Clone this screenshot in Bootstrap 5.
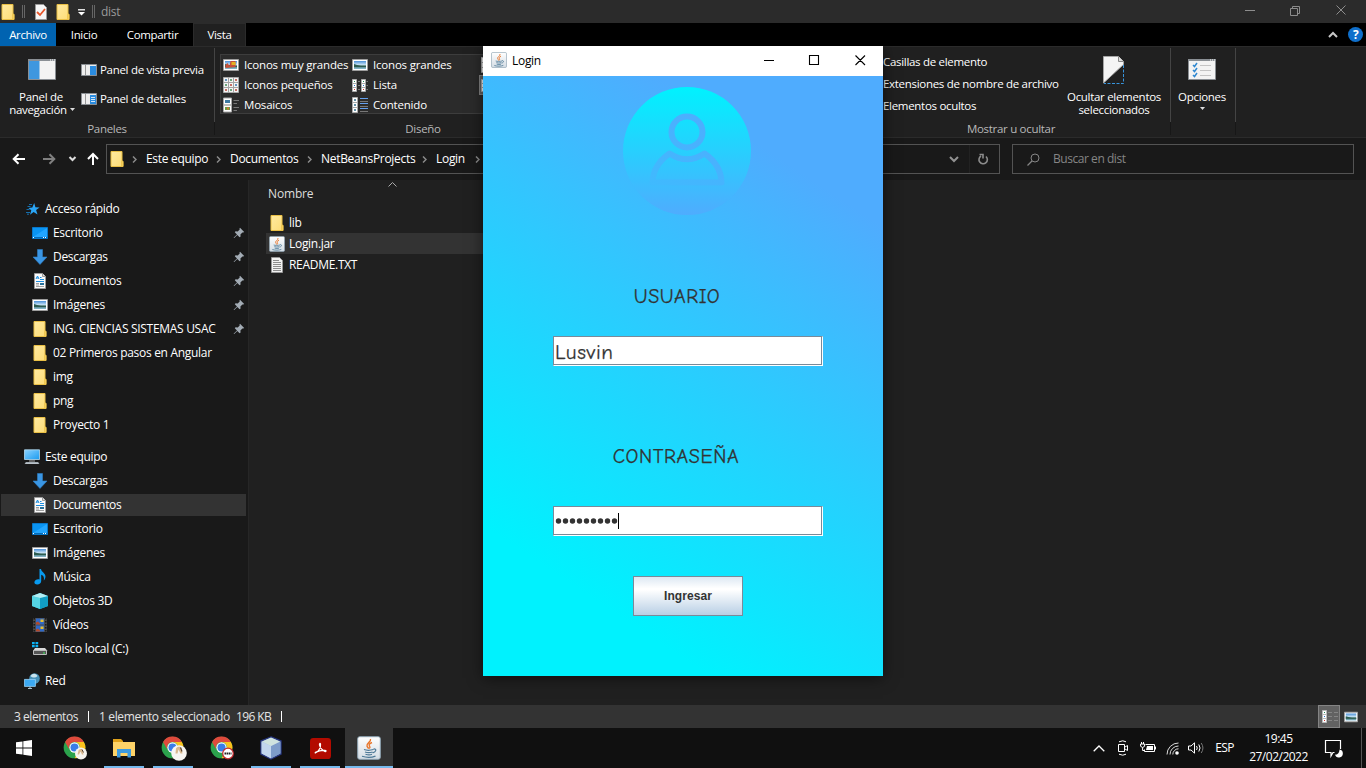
<!DOCTYPE html>
<html lang="es">
<head>
<meta charset="utf-8">
<meta name="viewport" content="width=device-width, initial-scale=1">
<title>dist</title>
<link href="https://cdn.jsdelivr.net/npm/bootstrap@5.3.0/dist/css/bootstrap.min.css" rel="stylesheet">
<style>
  body { width: 1366px; height: 768px; overflow: hidden; background: #191919; color: #fff; font: 12px/16px "Open Sans", "Noto Sans", sans-serif; letter-spacing: -.3px; white-space: nowrap; }
  svg { display: block; flex: none; overflow: visible; }
  .titlebar { height: 23px; background: #2b2b2b; color: #9a9a9a; }
  .tick { width: 3px; height: 13px; border: 1px solid #666; border-width: 0 1px; }
  .tabs { height: 23px; background: #000; font-size: 11.5px; letter-spacing: -.35px; }
  .tabs > .tab { height: 23px; line-height: 24px; text-align: center; }
  .tab-file { width: 56px; background: #0063b1; }
  .tab-on { width: 53px; background: #202020; border: 1px solid #2b2b2b; border-bottom: 0; line-height: 22px !important; }
  .ribbon { height: 92px; background: #202020; border-top: 1px solid #2b2b2b; border-bottom: 1px solid #2b2b2b; font-size: 11.5px; letter-spacing: -.3px; }
  .group { height: 90px; border-right: 1px solid #3c3c3c; border-image: linear-gradient(#202020 2px, #444 2px 74px, #171717 74px 87px, #202020 87px) 1; border-width: 0 1px 0 0; border-style: solid; }
  .caption { height: 16px; color: #b8b8b8; text-align: center; }
  .gallery { width: 650px; height: 60px; border: 1px solid #3d3d3d; background: #2b2b2b; letter-spacing: -.2px; }
  .gallery .cell { height: 20px; }
  .gallery .cell span { margin-top: -1px; }
  .center-lines { text-align: center; line-height: 13px; }
  .address { height: 42px; background: #191919; }
  .box { height: 30px; border: 1px solid #535353; }
  .side { width: 249px; background: #191919; border-right: 1px solid #262626; padding-top: 17px; }
  .row24 { height: 24px; }
  .side .child { padding-left: 32px; }
  .side .root { padding-left: 24px; }
  .picked { background: #333; box-shadow: inset 0 1px #191919, inset 0 -1px #191919, inset 1px 0 #191919; margin-right: 2px; }
  .files { background: #202020; }
  .file { height: 21px; margin-left: 17px; padding-left: 3px; }
  .status { height: 23px; background: #333; color: #e4e4e4; }
  .viewbtn { width: 22px; height: 23px; background: #626262; border: 1px solid #848484; }
  .taskbar { height: 40px; background: #101010; }
  .app { width: 48px; height: 40px; }
  .open::after { content: ""; position: absolute; left: 4px; right: 4px; bottom: 0; height: 2px; background: #76b9ed; }
  .active { background: #333; }
  .active::after { left: 0; right: 0; }
  .tray > .slot { width: 24px; }
  .login { left: 483px; top: 46px; width: 400px; height: 630px; box-shadow: 0 2px 14px rgba(0,0,0,.55); }
  .login-title { height: 30px; background: #fff; color: #000; }
  .login-body { height: 600px; background: linear-gradient(213.69deg, #4facfe 17.4%, #00f2fe 82.6%); color: #333; }
  .comic { font-family: "Comic Sans MS", "Comic Neue", "Open Sans", sans-serif; font-size: 20px; line-height: 26px; letter-spacing: .65px; -webkit-text-stroke: .25px #333; }
  .entry { width: 270px; height: 30px; background: #fff; border: 1px solid #7a8a99; border-right-color: #fff; border-bottom-color: #fff; box-shadow: inset -1px -1px #7a8a99; padding-left: 1px; }
  .caret { width: 1px; height: 16px; background: #000; }
  .go { width: 110px; height: 40px; border: 1px solid #7a8a99; background: linear-gradient(#dde8f3, #fff 30%, #fff 34%, #b8cfe5); font: bold 12px "Liberation Sans", sans-serif; color: #333; letter-spacing: .05px; border-radius: 0; padding: 0; }
</style>
</head>
<body>
<svg width="0" height="0" class="position-absolute">
  <defs>
    <linearGradient id="gy" x1="0" y1="0" x2="1" y2="1"><stop offset="0" stop-color="#ffeaa0"/><stop offset="1" stop-color="#fddc76"/></linearGradient>
    <linearGradient id="gb" x1="0" y1="0" x2="1" y2="1"><stop offset="0" stop-color="#8ad2ff"/><stop offset="1" stop-color="#1a9bf0"/></linearGradient>
    <linearGradient id="av" x1="0" y1="0" x2="0" y2="1"><stop offset="0" stop-color="#00f2fe"/><stop offset="1" stop-color="#4facfe"/></linearGradient>
    <linearGradient id="sky" x1="0" y1="0" x2="0" y2="1"><stop offset="0" stop-color="#4a8fd8"/><stop offset=".5" stop-color="#cfe8f7"/><stop offset=".6" stop-color="#3b6a60"/><stop offset="1" stop-color="#8fc0d8"/></linearGradient>
    <linearGradient id="jv" x1="0" y1="0" x2="0" y2="1"><stop offset="0" stop-color="#fff"/><stop offset="1" stop-color="#d3dce4"/></linearGradient>
    <symbol id="folder" viewBox="0 0 16 16"><path d="M2 .5h11v10h1v5H2z" fill="url(#gy)" stroke="#e9bf45"/><path d="M12.500 15.500v-4.500l.5-1h1v5.500z" fill="#fbd766" stroke="#e9bf45" stroke-width=".7"/></symbol>
    <symbol id="desk" viewBox="0 0 16 16"><path d="M.5 2.500h15v11h-15z" fill="#0a94f2" stroke="#0877c9"/><path d="M1 12L15 3v9z" fill="#22a5ff"/><path d="M1 12.500h14" stroke="#046bb8"/><path d="M1 12.500h1M11 12.500h1M13 12.500h1" stroke="#fff"/></symbol>
    <symbol id="down" viewBox="0 0 16 16"><path d="M5.500 .5h5v7.500H15L8 15.500 1 8h4.500z" fill="#3a96e4" stroke="#2f7fc6" stroke-width=".6"/></symbol>
    <symbol id="doc" viewBox="0 0 16 16"><path d="M2.500 .5h8l3 3v12h-11z" fill="#fafafa" stroke="#9b9b9b"/><path d="M10.500 .5v3h3" fill="#ddd" stroke="#888" stroke-width=".8"/><path d="M4 6l1.500-3L7 6M4.500 5h2M8 4.500h1.500M8 6.500h4M4 8.500h8" stroke="#1c8ee0" fill="none"/><path d="M4 10.500h3M4 13.500h8M4 12h3" stroke="#888" stroke-width=".8"/><path d="M8 10h4v2H8z" fill="#27709b"/></symbol>
    <symbol id="pic" viewBox="0 0 16 16"><path d="M.5 2.500h15v11h-15z" fill="#fff" stroke="#9d9d9d"/><path d="M2 4h12v8H2z" fill="url(#sky)"/><path d="M2 7l3 1 4 1h5v1H2z" fill="#2c5c50"/></symbol>
    <symbol id="pin" viewBox="0 0 12 12"><path d="M7 .8l4.200 4.200-1 .6-.8-.2-2 2 .2 2.100-1 .8L4.300 8 1.200 11H.8v-.5L4 7.500 1.800 5.300l.8-1 2.100.2 2-2L6.500 1.500z" fill="#a3acb5"/></symbol>
    <symbol id="star" viewBox="0 0 16 16"><path d="M10.200 2l1.200 4.200 4.200.2-3.500 2.600 1.400 4.500-3.900-2.500L6 13.800l1.300-4.500L4.400 7l3.900-.5z" fill="#2aa5f5"/><path d="M5 3.500h3M3.500 5.500h3M2.500 8.500h3M2 11.500h4M3 13.200h2" stroke="#1583cf" stroke-width=".8"/></symbol>
    <symbol id="pc" viewBox="0 0 16 16"><path d="M.5 .8h15v9.700H.5z" fill="url(#gb)" stroke="#b5dcf2" stroke-width=".8"/><path d="M5 12h6" stroke="#aaa"/><path d="M2 13h12l1.500 2H.5z" fill="#8f9ba4"/><path d="M1.500 14.200h13" stroke="#e8edf0" stroke-width=".7"/></symbol>
    <symbol id="note" viewBox="0 0 16 16"><path d="M7.500 0h1.500c.3 3 4.500 4 4.500 7.500 0 1.500-.8 3-1.700 4 .7-3-.3-5-2.600-5.700V12c0 2-1.800 3.500-3.900 3.500S2.200 14.200 2.400 13c.3-2 2.800-3.300 5.100-2.600z" fill="#089aef"/></symbol>
    <symbol id="cube" viewBox="0 0 16 16"><path d="M0 3L8 0l8 3v10l-8 3-8-3z" fill="#28b8d2"/><path d="M0 3l8 2v11l-8-3z" fill="#55d5e4"/><path d="M8 5l8-2v10l-8 3z" fill="#119dc3"/><path d="M0 3l8-3 8 3-8 2z" fill="#b2eef4"/></symbol>
    <symbol id="film" viewBox="0 0 16 16"><path d="M1 1h14v14H1z" fill="#4a4a4a"/><path d="M2.200 1v14M13.800 1v14" stroke="#151515" stroke-dasharray="1.500 1.500" stroke-width="1.400"/><path d="M4 1.500h8v6H4zM4 8.500h8v6H4z" fill="#2f68c6"/><path d="M4 5.500l2-1 2 2v1H4zM4 12.500l2-1 2 2v1H4z" fill="#b34a2b"/><path d="M8.500 2.500h3v2.500h-3zM8.500 9.500h3V12h-3z" fill="#e9bf2d"/></symbol>
    <symbol id="disk" viewBox="0 0 16 16"><path d="M0 1h2.700v2.300H0zM3.500 1h2.700v2.300H3.500zM0 4h2.700v2.300H0zM3.500 4h2.700v2.300H3.500z" fill="#0db3f5"/><path d="M3 7h10l2.500 3H1z" fill="#d8d8d8"/><path d="M1.500 9.500h13v4h-13z" fill="#555" stroke="#bbb"/><path d="M11 12h2" stroke="#3df05a"/></symbol>
    <symbol id="net" viewBox="0 0 16 16"><circle cx="10.500" cy="5.500" r="5.300" fill="#4591b8"/><path d="M6.500 3c2-3 5-3 7 0-2 2-5 2-7 0" fill="#c9e4ee"/><path d="M.4 6.400h11v7H.4z" fill="#3ca9f2" stroke="#99d3f7" stroke-width=".8"/><path d="M4 15.500h4M6 13.500v2" stroke="#a9c4d3"/></symbol>
    <symbol id="cup" viewBox="0 0 24 24"><rect x=".7" y=".7" width="22.600" height="22.600" rx="2" fill="url(#jv)" stroke="#8fa5b4" stroke-width="1"/><path d="M13.500 3c1 3-4.500 4.200-3.500 7 .3 1 1.500 1.700 1.500 2.700M15 6.500c-3 1.200-3.400 2.300-2.300 3.800.5.800.2 1.600-.4 2.200" fill="none" stroke="#e8762c" stroke-width="1.400"/><path d="M7 13.500c2 .8 7 .7 9.500 0M8 16c2 .7 5.500.7 7.500 0M8.500 18.300c2 .6 5 .6 6.500 0M5 20.300c4 1.300 10 1.200 13.500-.2M16.500 13c3.500-.5 2.800 3-.8 3.800" fill="none" stroke="#4d7896" stroke-width="1.200"/></symbol>
    <symbol id="txt" viewBox="0 0 16 16"><path d="M2.500 .5h8l3 3v12h-11z" fill="#f2f2f2" stroke="#999"/><path d="M4 3.500h6M4 5.500h8M4 7.500h8M4 9.500h8M4 11.500h8M4 13.500h8" stroke="#8c8c8c"/></symbol>
    <symbol id="chrome" viewBox="0 0 24 24"><circle cx="12" cy="12" r="11.300" fill="#2ba24c"/><path d="M2.200 6.300A11.300 11.300 0 0 1 21.800 6.300H12a5.700 5.700 0 0 0-5 8.500z" fill="#df4a3c"/><path d="M21.800 6.300A11.300 11.300 0 0 1 12 23.300l5-8.500a5.700 5.700 0 0 0-5-8.500z" fill="#fbc21c"/><circle cx="12" cy="12" r="5.400" fill="#fff"/><circle cx="12" cy="12" r="4.200" fill="#3a7de8"/></symbol>
    <symbol id="small" viewBox="0 0 16 16"><path d="M.5 .5h15v15H.5z" fill="#f4f4f4" stroke="#aaa"/><path d="M5.500 0v16M10.500 0v16M0 5.500h16M0 10.500h16" stroke="#a4a4a4"/><path d="M2 3h2M12 8h2" stroke="#3675ae" stroke-width="1.600"/><path d="M7 3h2M2 8h2M7 13h2" stroke="#3f8b55" stroke-width="1.600"/><path d="M12 3h2M7 8h2M12 13h2M2 13h2" stroke="#b64336" stroke-width="1.600"/></symbol>
    <symbol id="list" viewBox="0 0 16 16"><path d="M.5 2.500h4v12h-4zM9.500 2.500h4v12h-4z" fill="#fff" stroke="#aaa"/><path d="M0 6.500h5M0 10.500h5M9 6.500h5M9 10.500h5" stroke="#aaa"/><path d="M2 4.500h1M11 4.500h1" stroke="#278a57"/><path d="M2 8.500h1M11 8.500h1" stroke="#2573d0"/><path d="M2 12.500h1M11 12.500h1" stroke="#d03030"/><path d="M6 4.500h2M6 8.500h2M6 12.500h2M14.500 4.500H16M14.500 8.500H16M14.500 12.500H16" stroke="#777"/></symbol>
    <symbol id="tiles" viewBox="0 0 16 16"><path d="M.5 1h8v7h-8zM.5 8h8v7h-8z" fill="#fff" stroke="#aaa"/><path d="M2 3h5v3H2z" fill="#3d7aa2"/><path d="M2 10h5v3H2z" fill="#6a9d47"/><path d="M4 10.500h2v2H4z" fill="#d87534"/><path d="M10.500 3.500H16M10.500 6.500H14M10.500 10.500H16M10.500 13.500H14" stroke="#777"/></symbol>
    <symbol id="cont" viewBox="0 0 16 16"><path d="M.5 .5h5v5h-5zM.5 5.500h5v5h-5zM.5 10.500h5v5h-5z" fill="#fff" stroke="#aaa"/><path d="M2 3h2M2 8h2M2 13h2" stroke="#316d8b" stroke-width="1.500"/><path d="M8 1.500h8M8 6.500h8M8 11.500h8" stroke="#64a0ee"/><path d="M8 4.500h8M8 9.500h8M8 14.500h8" stroke="#777"/></symbol>
    <symbol id="sep" viewBox="0 0 5 7"><path d="M1 .5l3 3-3 3" fill="none" stroke="#8a8a8a" stroke-width="1.500"/></symbol>
  </defs>
</svg>

<div class="d-flex flex-column vh-100">
  <header class="titlebar d-flex align-items-center">
    <svg width="16" height="16"><use href="#folder"/></svg>
    <span class="tick" style="margin-left:6px"></span>
    <svg width="14" height="16" viewBox="0 0 14 16" style="margin-left:9px"><path d="M1.500 .5h8l3 3v12h-11z" fill="#f6f6f6" stroke="#999"/><path d="M3 8l3 3 5-6" fill="none" stroke="#e8562b" stroke-width="1.800"/></svg>
    <svg width="16" height="16" style="margin-left:7px"><use href="#folder"/></svg>
    <svg width="8" height="8" viewBox="0 0 8 8" style="margin:3px 0 0 7px"><path d="M0 .8h7" stroke="#fff" stroke-width="1.300"/><path d="M0 3h7L3.500 6.500z" fill="#fff"/></svg>
    <span class="tick" style="margin-left:6px"></span>
    <span style="margin-left:6px">dist</span>
    <div class="d-flex ms-auto align-items-center" style="margin-right:19px">
      <svg width="102" height="12" viewBox="0 0 102 12" style="margin-bottom:3px"><path d="M0 6.500h10M45.500 4.500h7v7h-7zM47.500 4v-1.500h7v7H53M91.500 1.500l9 9M100.500 1.500l-9 9" fill="none" stroke="#8d8d8d"/></svg>
    </div>
  </header>

  <nav class="tabs d-flex">
    <span class="tab tab-file">Archivo</span>
    <span class="tab" style="width:56px">Inicio</span>
    <span class="tab" style="width:81px">Compartir</span>
    <span class="tab tab-on">Vista</span>
    <div class="ms-auto d-flex align-items-center">
      <svg width="10" height="7" viewBox="0 0 10 7"><path d="M1 6l4-4 4 4" fill="none" stroke="#c8c8c8" stroke-width="2"/></svg>
      <svg width="15" height="15" viewBox="0 0 15 15" style="margin:0 3px 0 10px"><circle cx="7.500" cy="7.500" r="7.500" fill="#0f6fcb"/><text x="7.600" y="12" font-size="12" font-weight="700" fill="#fff" text-anchor="middle">?</text></svg>
    </div>
  </nav>

  <section class="ribbon d-flex">
    <div class="group d-flex flex-column" style="width:215px">
      <div class="d-flex" style="height:74px">
        <div class="center-lines d-flex flex-column align-items-center" style="width:84px;padding-top:12px">
          <svg width="28" height="21" viewBox="0 0 28 21"><path d="M.5 .5h27v20H.5z" fill="#f3f3f3" stroke="#8a8f94"/><path d="M1 2h10.500v18H1z" fill="#3e97df"/><path d="M0 1h28" stroke="#8a8f94" stroke-width="2"/><path d="M22 1h5" stroke="#fff" stroke-dasharray="1 1"/></svg>
          <div style="margin:10px 2px 0 0">Panel de</div>
          <div class="d-flex align-items-center">navegación<svg width="5" height="4" viewBox="0 0 5 4" style="margin-left:3px"><path d="M0 0h5L2.500 3z" fill="#ddd"/></svg></div>
        </div>
        <div class="d-flex flex-column" style="padding-top:15px;gap:13px;margin-left:-3px">
          <div class="d-flex align-items-center"><svg width="16" height="12" viewBox="0 0 16 12" style="margin-right:3px"><path d="M.5 .5h15v11H.5z" fill="#eee" stroke="#8a8f94"/><path d="M4.500 1v10" stroke="#999"/><path d="M9 2h6v9H9z" fill="#2a8ce0"/></svg>Panel de vista previa</div>
          <div class="d-flex align-items-center"><svg width="16" height="12" viewBox="0 0 16 12" style="margin-right:3px"><path d="M.5 .5h15v11H.5z" fill="#eee" stroke="#8a8f94"/><path d="M4.500 1v10" stroke="#999"/><path d="M9 2h6v9H9z" fill="#2a8ce0"/><path d="M10 4.500h4M10 6.500h4M10 8.500h4" stroke="#fff" stroke-width=".8"/></svg>Panel de detalles</div>
        </div>
      </div>
      <div class="caption">Paneles</div>
    </div>
    <div class="d-flex flex-column" style="width:668px;padding:7px 0 0 5px">
      <div class="gallery d-flex">
        <div style="width:129px;padding-left:2px">
          <div class="cell d-flex align-items-center"><svg width="16" height="16" viewBox="0 0 16 16"><use href="#pic" width="16" height="16"/><path d="M2.500 11V8l2-2 2 3 1-5h5v6z" fill="#c8503a"/><path d="M8.500 5h4v3h-4z" fill="#e3b221"/></svg><span style="margin-left:5px">Iconos muy grandes</span></div>
          <div class="cell d-flex align-items-center"><svg width="16" height="16"><use href="#small"/></svg><span style="margin-left:5px">Iconos pequeños</span></div>
          <div class="cell d-flex align-items-center"><svg width="16" height="16"><use href="#tiles"/></svg><span style="margin-left:5px">Mosaicos</span></div>
        </div>
        <div style="width:129px;padding-left:2px">
          <div class="cell d-flex align-items-center"><svg width="16" height="16"><use href="#pic"/></svg><span style="margin-left:5px">Iconos grandes</span></div>
          <div class="cell d-flex align-items-center"><svg width="16" height="16"><use href="#list"/></svg><span style="margin-left:5px">Lista</span></div>
          <div class="cell d-flex align-items-center"><svg width="16" height="16"><use href="#cont"/></svg><span style="margin-left:5px">Contenido</span></div>
        </div>
        <div style="width:129px">
          <div class="cell d-flex align-items-center" style="padding-left:2px"><svg width="16" height="16"><use href="#small"/></svg></div>
          <div class="cell d-flex align-items-center" style="background:#626262;border:1px solid #848484;padding-left:1px"><svg width="16" height="16"><use href="#list"/></svg></div>
        </div>
      </div>
      <div class="caption" style="width:406px;margin-top:7px">Diseño</div>
    </div>
    <div class="group d-flex flex-column" style="width:288px">
      <div class="d-flex" style="height:74px">
        <div class="d-flex flex-column" style="width:177px;padding-top:7px;gap:6px"><span>Casillas de elemento</span><span>Extensiones de nombre de archivo</span><span>Elementos ocultos</span></div>
        <div class="center-lines d-flex flex-column align-items-center" style="width:108px;padding-top:9px">
          <svg width="22" height="28" viewBox="0 0 22 28"><path d="M.5 27V.5h15l5 5v3z" fill="#f4f4f4" stroke="#a5a5a5"/><path d="M15.500 .5v5h5" fill="#ddd" stroke="#888"/><path d="M20.500 9v18.500H1" fill="none" stroke="#3795de" stroke-dasharray="3 1.500"/></svg>
          <div style="margin-top:6px">Ocultar elementos</div>
          <div>seleccionados</div>
        </div>
      </div>
      <div class="caption" style="margin-right:31px">Mostrar u ocultar</div>
    </div>
    <div class="group center-lines d-flex flex-column align-items-center" style="width:65px;padding:12px 2px 0 0">
      <svg width="28" height="21" viewBox="0 0 28 21"><path d="M.5 .5h27v20H.5z" fill="#f3f3f3" stroke="#8a8f94"/><path d="M0 1h28" stroke="#8a8f94" stroke-width="2"/><path d="M22 1h5" stroke="#fff" stroke-dasharray="1 1"/><path d="M12 6.500h11M12 11.500h11M12 16.500h11" stroke="#c4c4c4"/><path d="M5 6l1.500 1.500L9 4M5 11l1.500 1.500L9 9M5 16l1.500 1.500L9 14" fill="none" stroke="#3088d0" stroke-width="1.500"/></svg>
      <div style="margin-top:10px">Opciones</div>
      <svg width="5" height="4" viewBox="0 0 5 4" style="margin-top:4px"><path d="M0 0h5L2.500 3z" fill="#ddd"/></svg>
    </div>
  </section>

  <section class="address d-flex align-items-center">
    <svg width="106" height="16" viewBox="0 0 106 16"><g fill="none" stroke-width="2"><path d="M25 8H14M18.500 3.200L13.700 8l4.800 4.800" stroke="#fff"/><path d="M43 8h11M49.500 3.200L54.300 8l-4.800 4.800" stroke="#808080"/><path d="M69.500 6l3 3 3-3" stroke="#ddd"/><path d="M93 14V3M88 8l5-5 5 5" stroke="#fff"/></g></svg>
    <div class="box d-flex align-items-center" style="width:894px;padding-left:2px">
      <svg width="16" height="16"><use href="#folder"/></svg>
      <div class="d-flex align-items-center" style="margin-left:7px">
        <svg width="5" height="7"><use href="#sep"/></svg>
        <span style="width:79px;padding-left:9px">Este equipo</span>
        <svg width="5" height="7"><use href="#sep"/></svg>
        <span style="width:86px;padding-left:9px">Documentos</span>
        <svg width="5" height="7"><use href="#sep"/></svg>
        <span style="width:110px;padding-left:9px">NetBeansProjects</span>
        <svg width="5" height="7"><use href="#sep"/></svg>
        <span style="width:48px;padding-left:9px">Login</span>
        <svg width="5" height="7"><use href="#sep"/></svg>
      </div>
      <svg class="ms-auto" width="50" height="28" viewBox="0 0 50 28"><path d="M1 12l4 4 4-4" fill="none" stroke="#929292" stroke-width="2"/><path d="M20.500 0v28" stroke="#222"/><path d="M37 11.500a4.200 4.200 0 1 1-5-.5M30.500 9.500h3.500v4" fill="none" stroke="#8c8c8c" stroke-width="1.600"/></svg>
    </div>
    <div class="box d-flex align-items-center" style="width:342px;margin-left:12px;padding-left:14px;color:#858585">
      <svg width="13" height="13" viewBox="0 0 13 13"><circle cx="8" cy="5" r="4" fill="none" stroke="#858585"/><path d="M5 8L.5 12.500" stroke="#858585" stroke-width="1.200"/></svg>
      <span style="margin-left:13px;letter-spacing:-.45px">Buscar en dist</span>
    </div>
  </section>

  <main class="d-flex flex-grow-1" style="min-height:0">
    <aside class="side" id="side"></aside>
    <section class="files flex-grow-1">
      <div class="d-flex" style="height:32px;padding:6px 0 0 19px;color:#dedede;letter-spacing:-.15px"><span style="width:120px">Nombre</span><svg width="9" height="5" viewBox="0 0 9 5" style="margin-top:-4px"><path d="M.5 4.500l4-4 4 4" fill="none" stroke="#aaa"/></svg></div>
      <div class="file d-flex align-items-center"><svg width="16" height="16"><use href="#folder"/></svg><span style="margin-left:4px">lib</span></div>
      <div class="file d-flex align-items-center" style="background:#333;width:600px"><svg width="16" height="16"><use href="#cup"/></svg><span style="margin-left:4px">Login.jar</span></div>
      <div class="file d-flex align-items-center"><svg width="16" height="16"><use href="#txt"/></svg><span style="margin-left:4px">README.TXT</span></div>
    </section>
  </main>

  <footer class="status d-flex align-items-center">
    <span style="width:88px;padding-left:14px;letter-spacing:-.45px">3 elementos</span>
    <span style="width:1px;height:11px;background:#fff"></span>
    <span style="margin-left:10px;width:137px;letter-spacing:-.35px">1 elemento seleccionado</span>
    <span style="width:45px;letter-spacing:-.6px">196 KB</span>
    <span style="width:1px;height:11px;background:#fff"></span>
    <div class="viewbtn ms-auto d-flex align-items-center" style="padding-left:3px"><svg width="16" height="14" viewBox="0 0 16 14"><path d="M.5 .5h4v4h-4zM.5 4.500h4v4h-4zM.5 8.500h4v4h-4z" fill="#fff" stroke="#bbb"/><path d="M2 2.500h1" stroke="#278a57"/><path d="M2 6.500h1" stroke="#2573d0"/><path d="M2 10.500h1" stroke="#d03030"/><path d="M6 2.500h4M12 2.500h4M6 6.500h4M12 6.500h4M6 10.500h4M12 10.500h4" stroke="#858585"/></svg></div>
    <svg width="14" height="14" style="margin:0 8px 0 4px"><use href="#pic"/></svg>
  </footer>

  <footer class="taskbar d-flex">
    <div class="app d-flex align-items-center justify-content-center" style="margin-right:3px"><svg width="16" height="16" viewBox="0 0 16 16"><path d="M0 2.300L6.500 1.400v6.100H0zM7.300 1.200L16 0v7.500H7.300zM0 8.400h6.500v6.200L0 13.700zM7.300 8.400H16V16l-8.700-1.200z" fill="#fff"/></svg></div>
    <div class="d-flex" style="gap:1px">
      <div class="app d-flex align-items-center justify-content-center"><svg width="24" height="24" viewBox="0 0 24 24"><use href="#chrome" width="23" height="23"/><circle cx="18" cy="17.500" r="6" fill="#f6f4ef"/><path d="M15.500 14.500c1-2 4-2 4 0l1 4h-1.500l-1.500-3-1.500 3h-1.500z" fill="#d9b98f"/><path d="M19 13.500l1.500 3" stroke="#57402c" fill="none"/></svg></div>
      <div class="app open position-relative d-flex align-items-center justify-content-center"><svg width="22" height="20" viewBox="0 0 22 20"><path d="M0 1h8l2 2v4H0z" fill="#e0a21b"/><path d="M0 4h22v14H0z" fill="#fdd368"/><path d="M4 11h14v8.500h-3.500V15h-7v4.500H4z" fill="#3c9be0"/></svg></div>
      <div class="app open position-relative d-flex align-items-center justify-content-center"><svg width="24" height="24" viewBox="0 0 24 24"><use href="#chrome" width="23" height="23"/><circle cx="18" cy="17" r="7.800" fill="#f8f6f2"/><path d="M15 12.500c1-2.500 5-2.500 5.500 0l1 5h-2l-2-4-1 4h-2z" fill="#d9b98f"/><path d="M19.500 11.500l1.500 4" stroke="#57402c" fill="none" stroke-width="1.200"/></svg></div>
      <div class="app d-flex align-items-center justify-content-center"><svg width="24" height="24" viewBox="0 0 24 24"><use href="#chrome" width="23" height="23"/><circle cx="18" cy="17.500" r="5.300" fill="#fff" stroke="#c32a2e" stroke-width="1.200"/><path d="M14.500 17.500h7" stroke="#222" stroke-width="2.200" stroke-dasharray="1.500 .5"/></svg></div>
      <div class="app open position-relative d-flex align-items-center justify-content-center"><svg width="22" height="24" viewBox="0 0 22 24"><path d="M11 1l10 4v13l-10 5L1 18V5z" fill="#a6bfe2" stroke="#26357c" stroke-width="1.400"/><path d="M1.500 5.500L11 10v12.500l-9.500-5z" fill="#c2d6ee"/><path d="M11 10l9.500-4.500v12L11 22.500z" fill="#7d9cc9"/><path d="M11 1.500l9 4L11 10 2 5.500z" fill="#cfe3df"/></svg></div>
      <div class="app open position-relative d-flex align-items-center justify-content-center"><svg width="21" height="21" viewBox="0 0 22 22"><rect width="22" height="22" rx="3.500" fill="#b30b00"/><path d="M6 15.500c3-1.500 5.500-5.500 5-9-.2-1.500-1.500-1-1 1 .8 3 3 5.500 5.500 6.500 1.500.5 2-.8.300-1-3.500-.4-7 .5-9.500 1.800-1 .6-1.200 1-.3.700z" fill="none" stroke="#fff" stroke-width="1.300"/></svg></div>
      <div class="app open active position-relative d-flex align-items-center justify-content-center"><svg width="24" height="24"><use href="#cup"/></svg></div>
    </div>
    <div class="tray ms-auto d-flex align-items-center">
      <div class="slot d-flex justify-content-center"><svg width="12" height="7" viewBox="0 0 12 7"><path d="M.7 6.300L6 1l5.300 5.300" fill="none" stroke="#fff" stroke-width="1.300"/></svg></div>
      <div class="slot d-flex justify-content-center"><svg width="12" height="16" viewBox="0 0 12 16"><path d="M1.500 4.500h6v7h-6zM8 7l2.500-1.500v5L8 9M2 1.800q4-2 7 0M2 14.200q4 2 7 0" fill="none" stroke="#fff"/></svg></div>
      <div class="slot d-flex justify-content-center" style="width:25px"><svg width="16" height="12" viewBox="0 0 16 12"><path d="M5.500 2.500h9v7H4.500V7.500M1.500 0v2M3.500 0v2M.6 2h4v2.300L2.600 5.500.6 4.300zM2.600 5.500v3H4M15.500 4.500v3" fill="none" stroke="#fff"/><path d="M7 4h6v4H6z" fill="#fff"/></svg></div>
      <div class="slot d-flex justify-content-center"><svg width="13" height="13" viewBox="0 0 13 13"><path d="M1 12.500A11.500 11.500 0 0 1 12.500 1M4 12.500A8.500 8.500 0 0 1 12.500 4M6.800 12.500a5.700 5.700 0 0 1 5.700-5.700" fill="none" stroke="#ddd"/><circle cx="11" cy="11" r="1.800" fill="#fff"/></svg></div>
      <div class="slot d-flex justify-content-center"><svg width="16" height="12" viewBox="0 0 16 12"><path d="M.5 4h2.500L6.500 .8v10.400L3 8H.5z" fill="none" stroke="#fff"/><path d="M8.500 4q1.500 2 0 4M10.800 2.500q2.500 3.500 0 7" fill="none" stroke="#fff"/><path d="M13.200 1q3.500 5 0 10" fill="none" stroke="#777"/></svg></div>
      <span class="text-center" style="width:33px;letter-spacing:-.6px">ESP</span>
      <div class="text-center" style="width:75px;margin-right:-1px;line-height:18px;letter-spacing:-.5px">19:45<br>27/02/2022</div>
      <div class="d-flex justify-content-center" style="width:36px"><svg width="17" height="17" viewBox="0 0 17 17"><path d="M9.500 12.500H8l-2 3.500v-3.500H.5V.5h15v8.500" fill="none" stroke="#fff" stroke-width="1.200"/><path d="M14.500 9.500a4 4 0 1 1-4.500 5c2 .8 4.500-1.500 4.500-5" fill="#fff"/></svg></div>
      <span style="width:1px;height:40px;margin:0 4px 0 10px;background:#555"></span>
    </div>
  </footer>
</div>

<div class="login position-absolute">
  <div class="login-title d-flex align-items-center">
    <svg width="16" height="16" style="margin:0 5px 2px 8px"><use href="#cup"/></svg>
    <span>Login</span>
    <svg class="ms-auto" width="102" height="12" viewBox="0 0 102 12" style="margin-right:17px;margin-bottom:2px"><path d="M0 6.500h10M45.500 1.500h9v9h-9zM91.500 1.500l9.500 9.500M101 1.500L91.500 11" fill="none" stroke="#000" stroke-width="1.100"/></svg>
  </div>
  <div class="login-body d-flex flex-column align-items-center">
    <svg width="128" height="128" viewBox="0 0 128 128" style="margin:11px 0 0 8px">
      <mask id="cut"><path d="M0 0h128v128H0z" fill="#fff"/><g fill="none" stroke="#000" stroke-width="6"><circle cx="64" cy="45" r="15.500"/><path d="M46.500 66.500Q64 78 81.500 66.500Q98 78 98.500 95.500H29.500Q30 78 46.500 66.500z" stroke-linejoin="round"/></g></mask>
      <circle cx="64" cy="64" r="64" fill="url(#av)" mask="url(#cut)"/>
    </svg>
    <div class="comic" style="margin-top:69px;margin-right:12px">USUARIO</div>
    <div class="entry comic d-flex align-items-center" style="margin:26px 0 0 10px;padding-top:2px;font-size:21px;letter-spacing:.6px">Lusvin</div>
    <div class="comic" style="margin-top:78px;margin-right:14px">CONTRASEÑA</div>
    <div class="entry d-flex align-items-center" style="margin:36px 0 0 10px"><svg width="63" height="6" viewBox="0 0 63 6"><path d="M3.500 3h57" stroke="#333" stroke-width="5.400" stroke-linecap="round" stroke-dasharray="0 7"/></svg><span class="caret"></span></div>
    <button class="go btn" style="margin:40px 0 0 10px">Ingresar</button>
  </div>
</div>

<script src="https://cdn.jsdelivr.net/npm/bootstrap@5.3.0/dist/js/bootstrap.bundle.min.js"></script>
<script>
  const entries = [
    ['root', 'star', 'Acceso rápido'], ['child', 'desk', 'Escritorio', 1], ['child', 'down', 'Descargas', 1], ['child', 'doc', 'Documentos', 1],
    ['child', 'pic', 'Imágenes', 1], ['child', 'folder', 'ING. CIENCIAS SISTEMAS USAC', 1], ['child', 'folder', '02 Primeros pasos en Angular'],
    ['child', 'folder', 'img'], ['child', 'folder', 'png'], ['child', 'folder', 'Proyecto 1'],
    ['root mt-2', 'pc', 'Este equipo'], ['child', 'down', 'Descargas'], ['child picked', 'doc', 'Documentos'], ['child', 'desk', 'Escritorio'],
    ['child', 'pic', 'Imágenes'], ['child', 'note', 'Música'], ['child', 'cube', 'Objetos 3D'], ['child', 'film', 'Vídeos'], ['child', 'disk', 'Disco local (C:)'],
    ['root mt-2', 'net', 'Red']
  ];
  document.getElementById('side').innerHTML = entries.map(([kind, icon, label, pinned]) =>
    `<div class="row24 d-flex align-items-center ${kind}"><svg width="16" height="16"><use href="#${icon}"/></svg><span style="margin-left:5px">${label}</span>${pinned ? '<svg class="ms-auto" width="12" height="12" style="margin-right:3px"><use href="#pin"/></svg>' : ''}</div>`).join('');
</script>
</body>
</html>
